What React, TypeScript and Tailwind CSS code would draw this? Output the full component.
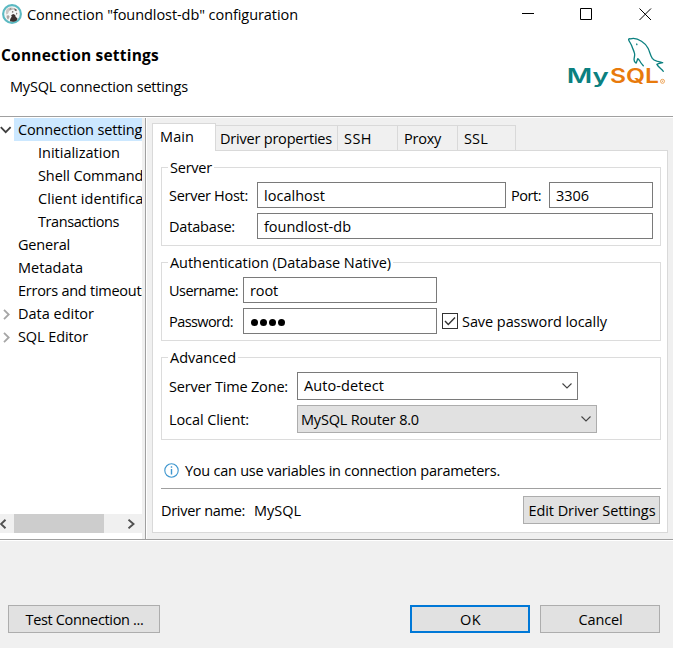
import { useLayoutEffect, useRef, useState } from "react";
import type { ReactNode } from "react";

/** Text tracked so that its line takes up `w` pixels. */
function Label({ children, w, className = "" }: { children: string; w: number; className?: string }) {
  const ref = useRef<HTMLSpanElement>(null);
  const [spacing, setSpacing] = useState(0);
  useLayoutEffect(() => {
    const el = ref.current;
    if (el) setSpacing((w - el.getBoundingClientRect().width) / children.length);
  }, []);
  return (
    <span ref={ref} className={`inline-block shrink-0 whitespace-pre ${className}`} style={{ letterSpacing: `${spacing}px` }}>
      {children}
    </span>
  );
}

function Group({ title, w, className, children }: { title: string; w: number; className: string; children: ReactNode }) {
  return (
    <section className={`relative ml-2 w-[500px] border border-[#dcdcdc] pl-[7px] ${className}`}>
      <h2 className="absolute -top-[12px] left-[6px] flex h-[23px] items-center bg-white px-[2px]">
        <Label w={w}>{title}</Label>
      </h2>
      {children}
    </section>
  );
}

function Field({ value, w, className }: { value: string; w: number; className: string }) {
  return (
    <div className={`flex h-[26px] shrink-0 items-center border border-[#7a7a7a] bg-white pt-[2px] pl-[6px] ${className}`}>
      <Label w={w}>{value}</Label>
    </div>
  );
}

function Button({ label, w, className }: { label: string; w: number; className: string }) {
  return (
    <button className={`flex h-7 items-center justify-center bg-[#e1e1e1] pt-[2px] pl-px ${className}`}>
      <Label w={w}>{label}</Label>
    </button>
  );
}

function Caret() {
  return (
    <svg className="mr-[5px] ml-auto shrink-0" width="10" height="6" viewBox="0 0 10 6" fill="none" stroke="#444" strokeWidth="1.1">
      <path d="M.5.5 5 5 9.500.5" />
    </svg>
  );
}

function AppIcon() {
  return (
    <svg className="mt-1 ml-[2px] shrink-0" width="20" height="20" viewBox="0 0 20 20">
      <circle cx="10" cy="10" r="8.900" fill="#f5f6f5" stroke="#5bb9c2" strokeWidth="2.100" />
      <path d="M4.500 5.500C6 3.700 8.500 3.300 10.500 3.700c2.200.1 4 1.300 4.800 3l-1.600.2-1.300-1.300-3 .3L7 7.300l-1 2.500-1.600.8c-.7-1.700-.6-3.700.1-5.100z" fill="#c9c6c4" />
      <path d="M7 5.200l2-.9.4 1.300zM12.300 4.300l2.500 1.400-.6 1.500-1.500-.7z" fill="#6b625e" />
      <path d="M8 17.300c0-2 .6-3.300 1.700-4.500l-.5-1.600 2-1.200 2 1 .4 1.800 1.900 1.700-.7 2c-2 1.500-4.500 1.600-6.800.8z" fill="#3b302e" />
      <path d="M4.700 11.500l2-.3 1 1.600-1.600 3c-1-.9-1.700-2.300-1.400-4.300z" fill="#aaa5a3" />
      <path d="M10 7.200l1.500.2-.3 1.200-1.300-.2zM14 8.500l1.400 1-.8 1.400z" fill="#544946" />
    </svg>
  );
}

function MySqlLogo() {
  return (
    <svg className="mt-[5px] mr-[7px] shrink-0" width="98" height="54" viewBox="0 -1 98 54">
      <g fill="none" stroke="#0b8080" strokeWidth="1.300" strokeLinejoin="round" strokeLinecap="round">
        <path d="M75.300 27.800C73.900 26.300 72.500 24.500 71.500 22.500L69.900 20.600c-.9 1.500-1 3.200-1.800 4.500-1.500-.8-2.200-2.400-2-4.200.2-2 .9-3.700.4-5.600-.6-2.500-1.800-4.600-2.600-7-.8-2.300-2.300-4.200-3.200-6.400C60.300.9 61.400.5 62.500.9c3.700-1.200 7.600.2 11 2.400 3 1.900 5.300 4.200 6.700 7.200 1.500 3.200 2.100 6.700 4.100 9.900 1.200 1.700 2.800 2.200 4.500 2.700 2 .4 4.200.7 5.900 1.600-1.900.6-3.900.7-5.800 1.700 1.500 2.700 4.500 4.500 6.400 6.900" />
        <path d="M68.700 6l.2.700" />
      </g>
      <g fontFamily="Inter, 'Open Sans', sans-serif" fontSize="19.800" fontWeight="600">
        <text x="-1.200" y="45.200" textLength="42" lengthAdjust="spacingAndGlyphs" fill="#0b8080">My</text>
        <text x="42" y="45.200" textLength="49" lengthAdjust="spacingAndGlyphs" fill="#e87a0c">SQL</text>
      </g>
      <circle cx="94.500" cy="43.300" r="2" fill="none" stroke="#eda458" strokeWidth="1" />
      <circle cx="94.500" cy="43.300" r=".7" fill="#eda458" />
    </svg>
  );
}

function TreeItem({ label, w, indent, arrow, selected }: { label: string; w: number; indent?: boolean; arrow?: "open" | "closed"; selected?: boolean }) {
  return (
    <li className="flex h-[23px] overflow-hidden">
      <span className="flex w-[14px] shrink-0 items-center">
        {arrow === "open" && (
          <svg width="12" height="8" viewBox="0 0 12 8" fill="none" stroke="#404040" strokeWidth="1.800">
            <path d="M.8 1.200 5.700 6.200 10.600 1.200" />
          </svg>
        )}
        {arrow === "closed" && (
          <svg className="mt-[2px] ml-[3px]" width="7" height="11" viewBox="0 0 7 11" fill="none" stroke="#a6a6a6" strokeWidth="1.800">
            <path d="M1 .8 5.700 5.500 1 10.200" />
          </svg>
        )}
      </span>
      <span className={`flex grow items-center ${indent ? "pl-6" : "pl-1"} ${selected ? "bg-[#cce8ff]" : ""}`}>
        <Label w={w}>{label}</Label>
      </span>
    </li>
  );
}

function Tab({ label, w, className }: { label: string; w: number; className: string }) {
  return (
    <div className={`flex h-[25px] items-center border-t border-r border-[#d9d9d9] bg-[#f0f0f0] pt-[2px] ${className}`}>
      <Label w={w}>{label}</Label>
    </div>
  );
}

export default function App() {
  return (
    <div className="flex h-[648px] w-[673px] flex-col overflow-hidden bg-[#f0f0f0] font-['Open_Sans','Noto_Sans',sans-serif] text-[14.500px] leading-[22px] text-black">
      <header className="h-[116px] shrink-0 bg-white">
        <div className="flex h-8">
          <AppIcon />
          <Label w={271} className="mt-1 ml-[5px]">{'Connection "foundlost-db" configuration'}</Label>
          <svg className="mt-[7px] mr-[21px] ml-auto" width="130" height="14" viewBox="0 0 130 14" fill="none" stroke="#000">
            <path d="M0 6.500h12M58.500 1.500h11v11h-11zM117.500 1.500l11.500 11.500M129 1.500 117.500 13" />
          </svg>
        </div>
        <div className="flex justify-between">
          <div className="flex flex-col items-start">
            <Label w={158} className="mt-3 ml-px text-[15.500px] font-bold">Connection settings</Label>
            <Label w={178} className="mt-[10px] ml-[10px]">MySQL connection settings</Label>
          </div>
          <MySqlLogo />
        </div>
      </header>

      <main className="flex h-[425px] shrink-0 border-t border-b border-t-[#a0a0a0] border-b-white">
        <div className="flex grow border-t border-b border-t-white border-b-[#a0a0a0]">
          <nav className="flex w-[142px] shrink-0 flex-col overflow-hidden bg-white">
            <ul>
              <TreeItem label="Connection settings" w={131} arrow="open" selected />
              <TreeItem label="Initialization" w={82} indent />
              <TreeItem label="Shell Commands" w={112} indent />
              <TreeItem label="Client identification" w={132} indent />
              <TreeItem label="Transactions" w={81} indent />
              <TreeItem label="General" w={52} />
              <TreeItem label="Metadata" w={65} />
              <TreeItem label="Errors and timeouts" w={130} />
              <TreeItem label="Data editor" w={76} arrow="closed" />
              <TreeItem label="SQL Editor" w={70} arrow="closed" />
            </ul>
            <div className="mt-auto mb-[6px] flex h-[19px] items-center bg-[#f0f0f0]">
              <svg className="shrink-0" width="14" height="10" viewBox="0 0 14 10" fill="none" stroke="#505050" strokeWidth="1.900">
                <path d="M5.500.7 1 5l4.500 4.300" />
              </svg>
              <div className="h-full w-[90px] bg-[#cdcdcd]" />
              <svg className="ml-6" width="7" height="10" viewBox="0 0 7 10" fill="none" stroke="#505050" strokeWidth="1.900">
                <path d="M.5.7 5.500 5 .5 9.300" />
              </svg>
            </div>
          </nav>
          <div className="ml-[3px] w-[2px] shrink-0 border-l border-[#a0a0a0] bg-white" />

          <div className="ml-[5px] flex w-[516px] flex-col pt-[5px]">
            <div className="z-10 -mb-px flex h-7 items-end">
              <div className="flex h-7 w-16 items-center border-t border-x border-[#d9d9d9] bg-white pb-px pl-[7px]">
                <Label w={34}>Main</Label>
              </div>
              <div className="mb-px flex">
                <Tab label="Driver properties" w={112} className="w-[122px] pl-1" />
                <Tab label="SSH" w={28} className="w-[60px] pl-[6px]" />
                <Tab label="Proxy" w={37} className="w-[60px] pl-[6px]" />
                <Tab label="SSL" w={24} className="w-[58px] pl-[6px]" />
              </div>
            </div>
            <div className="h-[383px] border border-[#d9d9d9] bg-white">
              <Group title="Server" w={42} className="mt-4 h-[79px] pt-[14px]">
                <div className="flex h-[26px] items-center">
                  <Label w={79} className="mt-[2px] mr-[9px]">Server Host:</Label>
                  <Field value="localhost" w={61} className="w-[249px]" />
                  <Label w={30} className="mt-[2px] mr-2 ml-[5px]">Port:</Label>
                  <Field value="3306" w={33} className="w-[104px]" />
                </div>
                <div className="mt-[5px] flex h-[26px] items-center">
                  <Label w={66} className="mt-[2px] mr-[22px]">Database:</Label>
                  <Field value="foundlost-db" w={87} className="w-[396px]" />
                </div>
              </Group>
              <Group title="Authentication (Database Native)" w={221} className="mt-4 h-[79px] pt-[14px]">
                <div className="flex h-[26px] items-center">
                  <Label w={69} className="mt-[2px] mr-[5px]">Username:</Label>
                  <Field value="root" w={28} className="w-[194px]" />
                </div>
                <div className="mt-[5px] flex h-[26px] items-center">
                  <Label w={64} className="mt-[2px] mr-[10px]">Password:</Label>
                  <div className="flex h-[26px] w-[194px] items-center gap-[2px] border border-[#7a7a7a] pt-[3px] pl-[7px]">
                    {[0, 1, 2, 3].map((i) => (
                      <i key={i} className="size-[7px] rounded-full bg-black" />
                    ))}
                  </div>
                  <div className="mr-1 ml-[5px] flex size-4 items-center justify-center border border-[#333]">
                    <svg width="12" height="10" viewBox="0 0 12 10" fill="none" stroke="#333" strokeWidth="1.400">
                      <path d="M1 5l3.300 3.500L11 1.500" />
                    </svg>
                  </div>
                  <Label w={145} className="mt-[2px]">Save password locally</Label>
                </div>
              </Group>
              <Group title="Advanced" w={66} className="mt-4 h-[83px] pt-[14px]">
                <div className="flex h-7 items-center">
                  <Label w={119} className="mt-[2px] mr-[9px]">Server Time Zone:</Label>
                  <div className="flex h-7 w-[281px] items-center border border-[#7a7a7a] pl-[6px]">
                    <Label w={80}>Auto-detect</Label>
                    <Caret />
                  </div>
                </div>
                <div className="mt-[5px] flex h-7 items-center">
                  <Label w={80} className="mt-[2px] mr-12">Local Client:</Label>
                  <div className="flex h-7 w-[300px] items-center border border-[#adadad] bg-[#e1e1e1] pl-[3px]">
                    <Label w={118} className="mt-[2px]">MySQL Router 8.0</Label>
                    <Caret />
                  </div>
                </div>
              </Group>
              <div className="mt-[19px] ml-3 flex h-[22px] items-center">
                <svg className="mr-[5px] -ml-px" width="15" height="15" viewBox="0 0 15 15" fill="none" stroke="#3f97cf">
                  <circle cx="7.500" cy="7.500" r="6.700" strokeWidth="1.100" />
                  <path d="M7.500 3.200v1.600M7.500 6v5.500" strokeWidth="1.400" />
                </svg>
                <Label w={315} className="mt-[2px] ml-px">You can use variables in connection parameters.</Label>
              </div>
              <div className="mt-[7px] ml-2 flex w-[500px] border-t border-[#a0a0a0] pt-[7px]">
                <Label w={84} className="mt-1">Driver name:</Label>
                <Label w={47} className="mt-1 ml-[9px]">MySQL</Label>
                <Button label="Edit Driver Settings" w={127} className="mr-px ml-auto w-[137px] border border-[#adadad]" />
              </div>
            </div>
          </div>
        </div>
      </main>

      <footer className="mt-16 flex pl-2">
        <Button label="Test Connection ..." w={118} className="w-[152px] border border-[#adadad]" />
        <Button label="OK" w={21} className="ml-[250px] w-[120px] border-2 border-[#0078d7]" />
        <Button label="Cancel" w={44} className="ml-[10px] w-[120px] border border-[#adadad]" />
      </footer>
    </div>
  );
}
